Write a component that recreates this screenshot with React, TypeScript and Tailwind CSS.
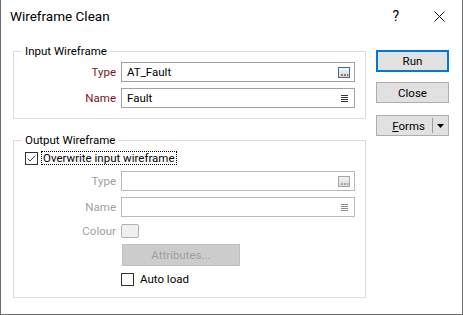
import React from "react";

const F = "font-['Roboto','Noto_Sans',sans-serif]";

function Ellipsis({ disabled }: { disabled?: boolean }) {
  return (
    <svg width="12" height="11" viewBox="0 0 12 11" className="block">
      <defs>
        <linearGradient id={disabled ? "gd" : "ge"} x1="0" y1="0" x2="0" y2="1">
          <stop offset="0" stopColor={disabled ? "#f4f4f4" : "#f4f8fc"} />
          <stop offset="1" stopColor={disabled ? "#d8d8d8" : "#c6d6ea"} />
        </linearGradient>
      </defs>
      <rect x="0.5" y="0.5" width="11" height="10" fill={`url(#${disabled ? "gd" : "ge"})`} stroke={disabled ? "#a6a6a6" : "#4c6a92"} />
      <rect x="3" y="7" width="2" height="2" fill={disabled ? "#a8a8a8" : "#b8741c"} />
      <rect x="6" y="7" width="2" height="2" fill={disabled ? "#a8a8a8" : "#b8741c"} />
      <rect x="9" y="7" width="1.5" height="2" fill={disabled ? "#a8a8a8" : "#b8741c"} />
    </svg>
  );
}

function Lines({ disabled }: { disabled?: boolean }) {
  const c = disabled ? "#8a8a8a" : "#333333";
  return (
    <svg width="7" height="7" viewBox="0 0 7 7" className="block">
      <rect x="0" y="0" width="7" height="1" fill={c} />
      <rect x="0" y="2" width="7" height="1" fill={c} />
      <rect x="0" y="4" width="7" height="1" fill={c} />
      <rect x="0" y="6" width="7" height="1" fill={c} />
    </svg>
  );
}

function Row({ label, disabled, children }: { label: string; disabled?: boolean; children: React.ReactNode }) {
  return (
    <div className="flex items-center">
      <div className={`w-[102px] mr-[5px] text-right ${disabled ? "text-[#a0a0a0]" : "text-[#7a1424]"}`}>{label}</div>
      {children}
    </div>
  );
}

function Field({ value, disabled, icon }: { value?: string; disabled?: boolean; icon: "e" | "l" }) {
  return (
    <div className={`w-[234px] h-[20px] border flex items-center pl-[5px] pr-[4px] ${disabled ? "border-[#b9b9b9] bg-white" : "border-[#a2a2a2] bg-white"}`}>
      <div className="flex-1 leading-[18px] text-black">{value}</div>
      {icon === "e" ? <Ellipsis disabled={disabled} /> : <div className="mr-[2px]"><Lines disabled={disabled} /></div>}
    </div>
  );
}

function Check({ checked }: { checked?: boolean }) {
  return (
    <div className="w-[13px] h-[13px] border border-[#333333] bg-white flex items-center justify-center shrink-0">
      {checked && (
        <svg width="11" height="11" viewBox="0 0 11 11" className="block">
          <polyline points="1.5,5.5 4,8 9.5,2.5" fill="none" stroke="#444" strokeWidth="1" />
        </svg>
      )}
    </div>
  );
}

export default function App() {
  return (
    <div className={`w-[463px] h-[315px] bg-white border-x border-b border-[#6e6e6e] text-[11.5px] text-black overflow-hidden ${F}`}>
      <div className="h-[43px] flex items-start pt-[6px] pl-[9px]">
        <div className="text-[13.5px] leading-[20px] text-black flex-1">Wireframe Clean</div>
        <div className="text-[14px] leading-[20px] mr-[35px] text-black">?</div>
        <svg width="11" height="11" viewBox="0 0 11 11" className="mt-[5px] mr-[17px]">
          <path d="M0.5 0.5 L10.5 10.5 M10.5 0.5 L0.5 10.5" stroke="#111" strokeWidth="1" />
        </svg>
      </div>
      <div className="flex pl-[12px] leading-[16px]">
        <div className="w-[353px] flex flex-col">
          <fieldset className="border border-[#dcdcdc] pr-[10px] pb-[10px]">
            <legend className="ml-[8px] px-[3px] leading-[16px]">Input Wireframe</legend>
            <div className="flex flex-col gap-[6px] pt-[3px]">
              <Row label="Type"><Field value="AT_Fault" icon="e" /></Row>
              <Row label="Name"><Field value="Fault" icon="l" /></Row>
            </div>
          </fieldset>
          <fieldset className="mt-[13px] border border-[#dcdcdc] pr-[10px] pb-[11px]">
            <legend className="ml-[8px] px-[3px] leading-[16px]">Output Wireframe</legend>
            <div className="flex flex-col pt-[3px]">
              <div className="flex items-center h-[14px] pl-[11px]">
                <Check checked />
                <div className="ml-[3px] border border-dotted border-black px-[1px] leading-[12px] h-[14px]">Overwrite input wireframe</div>
              </div>
              <div className="flex flex-col gap-[6px] mt-[6px]">
                <Row label="Type" disabled><Field disabled icon="e" /></Row>
                <Row label="Name" disabled><Field disabled icon="l" /></Row>
              </div>
              <div className="mt-[7px] h-[14px] flex items-center">
                <Row label="Colour" disabled>
                  <div className="w-[18px] h-[14px] border border-[#b0b0b0] rounded-[2px] bg-[#f0f0f0]" />
                </Row>
              </div>
              <div className="mt-[6px] ml-[108px] w-[118px] h-[22px] bg-[#cccccc] border border-[#bfbfbf] flex items-center justify-center text-[#a0a0a0]">
                Attributes...
              </div>
              <div className="mt-[7px] ml-[107px] h-[13px] flex items-center">
                <Check />
                <span className="ml-[6px] leading-[13px]">Auto load</span>
              </div>
            </div>
          </fieldset>
        </div>
        <div className="ml-[10px] mt-[7px] flex flex-col w-[73px]">
          <div className="h-[22px] border-2 border-[#0078d7] bg-[#e1e1e1] flex items-center justify-center">Run</div>
          <div className="mt-[10px] h-[21px] border border-[#adadad] bg-[#e1e1e1] flex items-center justify-center">Close</div>
          <div className="mt-[12px] h-[21px] border border-[#adadad] bg-[#e1e1e1] flex items-center justify-end">
            <span><span className="underline">F</span>orms</span>
            <div className="ml-[7px] w-px h-[15px] bg-[#9a9a9a]" />
            <div className="w-[15px] flex items-center justify-center">
              <svg width="7" height="4" viewBox="0 0 7 4" className="block">
                <polygon points="0,0 7,0 3.5,4" fill="#000" />
              </svg>
            </div>
          </div>
        </div>
      </div>
    </div>
  );
}
